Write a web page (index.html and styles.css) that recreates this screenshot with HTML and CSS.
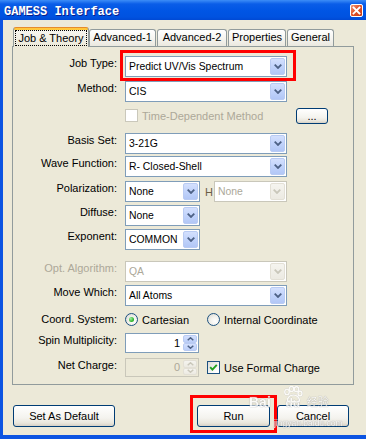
FILE: index.html
```html
<!DOCTYPE html>
<html>
<head>
<meta charset="utf-8">
<title>GAMESS Interface</title>
<link rel="stylesheet" href="styles.css">
</head>
<body>
<div class="window">
  <div class="titlebar">
    <span class="title">GAMESS Interface</span>
    <span class="close"><svg width="9" height="9" viewBox="0 0 9 9"><path d="M1.5 1.5L7.5 7.5M7.5 1.5L1.5 7.5" stroke="#fff" stroke-width="1.8" stroke-linecap="square"/></svg></span>
  </div>
  <div class="client">
    <div class="tabs">
      <div class="tab tab-active tw1"><span class="focus">Job &amp; Theory</span></div>
      <div class="tab tw2">Advanced-1</div>
      <div class="tab tw3">Advanced-2</div>
      <div class="tab tw4">Properties</div>
      <div class="tab tw5">General</div>
    </div>
    <div class="panel">
      <div class="row first">
        <span class="lbl">Job Type:</span>
        <div class="combo wide"><span class="val">Predict UV/Vis Spectrum</span><span class="drop"><svg width="8" height="5" viewBox="0 0 8 5"><polyline points="0.7,0.7 4,4 7.3,0.7" fill="none" stroke="#4D6185" stroke-width="1.8"/></svg></span></div>
      </div>
      <div class="row mt4">
        <span class="lbl">Method:</span>
        <div class="combo wide"><span class="val">CIS</span><span class="drop"><svg width="8" height="5" viewBox="0 0 8 5"><polyline points="0.7,0.7 4,4 7.3,0.7" fill="none" stroke="#4D6185" stroke-width="1.8"/></svg></span></div>
      </div>
      <div class="row">
        <span class="lbl"></span>
        <div class="tdm">
          <span class="check disabled"></span>
          <span class="opt-text dis">Time-Dependent Method</span>
          <span class="btn dots">...</span>
        </div>
      </div>
      <div class="row mt7">
        <span class="lbl">Basis Set:</span>
        <div class="combo wide"><span class="val">3-21G</span><span class="drop"><svg width="8" height="5" viewBox="0 0 8 5"><polyline points="0.7,0.7 4,4 7.3,0.7" fill="none" stroke="#4D6185" stroke-width="1.8"/></svg></span></div>
      </div>
      <div class="row mt2">
        <span class="lbl">Wave Function:</span>
        <div class="combo wide"><span class="val">R- Closed-Shell</span><span class="drop"><svg width="8" height="5" viewBox="0 0 8 5"><polyline points="0.7,0.7 4,4 7.3,0.7" fill="none" stroke="#4D6185" stroke-width="1.8"/></svg></span></div>
      </div>
      <div class="row mt4">
        <span class="lbl">Polarization:</span>
        <div class="combo small"><span class="val">None</span><span class="drop"><svg width="8" height="5" viewBox="0 0 8 5"><polyline points="0.7,0.7 4,4 7.3,0.7" fill="none" stroke="#4D6185" stroke-width="1.8"/></svg></span></div>
        <span class="hlabel">H</span>
        <div class="combo hsmall off"><span class="val">None</span><span class="drop"><svg width="8" height="5" viewBox="0 0 8 5"><polyline points="0.7,0.7 4,4 7.3,0.7" fill="none" stroke="#C9C7BA" stroke-width="1.8"/></svg></span></div>
      </div>
      <div class="row">
        <span class="lbl">Diffuse:</span>
        <div class="combo small"><span class="val">None</span><span class="drop"><svg width="8" height="5" viewBox="0 0 8 5"><polyline points="0.7,0.7 4,4 7.3,0.7" fill="none" stroke="#4D6185" stroke-width="1.8"/></svg></span></div>
      </div>
      <div class="row">
        <span class="lbl">Exponent:</span>
        <div class="combo small"><span class="val">COMMON</span><span class="drop"><svg width="8" height="5" viewBox="0 0 8 5"><polyline points="0.7,0.7 4,4 7.3,0.7" fill="none" stroke="#4D6185" stroke-width="1.8"/></svg></span></div>
      </div>
      <div class="row mt11">
        <span class="lbl dis">Opt. Algorithm:</span>
        <div class="combo wide off"><span class="val">QA</span><span class="drop"><svg width="8" height="5" viewBox="0 0 8 5"><polyline points="0.7,0.7 4,4 7.3,0.7" fill="none" stroke="#C9C7BA" stroke-width="1.8"/></svg></span></div>
      </div>
      <div class="row">
        <span class="lbl">Move Which:</span>
        <div class="combo wide"><span class="val">All Atoms</span><span class="drop"><svg width="8" height="5" viewBox="0 0 8 5"><polyline points="0.7,0.7 4,4 7.3,0.7" fill="none" stroke="#4D6185" stroke-width="1.8"/></svg></span></div>
      </div>
      <div class="row">
        <span class="lbl mid">Coord. System:</span>
        <div class="radios">
          <span class="ropt first-opt"><span class="radio on"><span class="dot"></span></span><span class="opt-text">Cartesian</span></span>
          <span class="ropt"><span class="radio"></span><span class="opt-text">Internal Coordinate</span></span>
        </div>
      </div>
      <div class="row spinrow">
        <span class="lbl">Spin Multiplicity:</span>
        <div class="spin"><span class="sval">1</span><span class="sbtns"><span class="sb"><svg width="7" height="4" viewBox="0 0 7 4"><polyline points="0.7,3.3 3.5,0.8 6.3,3.3" fill="none" stroke="#4D6185" stroke-width="1.5"/></svg></span><span class="sb"><svg width="7" height="4" viewBox="0 0 7 4"><polyline points="0.7,0.7 3.5,3.2 6.3,0.7" fill="none" stroke="#4D6185" stroke-width="1.5"/></svg></span></span></div>
      </div>
      <div class="row netrow">
        <span class="lbl">Net Charge:</span>
        <div class="spin off"><span class="sval">0</span><span class="sbtns"><span class="sb"><svg width="7" height="4" viewBox="0 0 7 4"><polyline points="0.7,3.3 3.5,0.8 6.3,3.3" fill="none" stroke="#C9C7BA" stroke-width="1.5"/></svg></span><span class="sb"><svg width="7" height="4" viewBox="0 0 7 4"><polyline points="0.7,0.7 3.5,3.2 6.3,0.7" fill="none" stroke="#C9C7BA" stroke-width="1.5"/></svg></span></span></div>
        <span class="check checked"><svg width="11" height="11" viewBox="0 0 11 11"><polyline points="2.2,5.2 4.4,7.6 8.8,2.8" fill="none" stroke="#21A121" stroke-width="1.9"/></svg></span>
        <span class="opt-text">Use Formal Charge</span>
      </div>
    </div>
    <div class="buttons">
      <span class="btn bdef">Set As Default</span>
      <span class="btn brun">Run</span>
      <span class="btn bcancel">Cancel</span>
    </div>
  </div>
  <div class="highlight hl-job"></div>
  <div class="highlight hl-run"></div>
  <div class="watermark">
    <div class="wm-top">
      <span class="wm-bai">Bai</span>
      <span class="wm-pawdu"><svg class="paw" width="20" height="17" viewBox="0 0 20 17"><g fill="none" stroke="#fff" stroke-width="1.6"><ellipse cx="4" cy="6" rx="2.2" ry="2.8"/><ellipse cx="8.5" cy="3" rx="2.2" ry="2.5"/><ellipse cx="13.5" cy="3.2" rx="2.2" ry="2.5"/><ellipse cx="17" cy="7.5" rx="2" ry="2.4"/><path d="M4.5 14.5C4.5 11 7.5 9 10.5 9S16.5 11.5 16.5 14.5C16.5 16 14 16.3 10.5 15.6C7 16.3 4.5 16 4.5 14.5Z"/></g></svg><span class="wm-du">du</span></span>
      <span class="cjk">经验</span>
    </div>
    <div class="wm-url">jingyan.baidu.com</div>
  </div>
</div>
</body>
</html>
```

FILE: styles.css
```css
* { box-sizing: border-box; }
html, body { margin: 0; padding: 0; }
body {
  width: 366px;
  height: 439px;
  overflow: hidden;
  background: #ECE9D8;
  font-family: "Liberation Sans", Arial, sans-serif;
  font-size: 11px;
  color: #000;
}
.window {
  position: relative;
  width: 366px;
  height: 439px;
  background: #0C54E2;
  display: flex;
  flex-direction: column;
  overflow: hidden;
}
.titlebar {
  flex: none;
  height: 20px;
  background: linear-gradient(#3D8DF7 0%, #0A5DE8 20%, #0055E4 55%, #0052E0 85%, #0049D4 100%);
  display: flex;
  align-items: flex-start;
  justify-content: space-between;
  padding-left: 4px;
}
.title {
  font-family: "Liberation Mono", "DejaVu Sans Mono", monospace;
  font-weight: bold;
  font-size: 12px;
  line-height: 14px;
  padding-top: 5px;
  color: #fff;
  text-shadow: 1px 1px 0 #0A1E8A;
}
.close {
  width: 13px;
  height: 13px;
  margin-top: 4px;
  margin-right: 3px;
  border: 1px solid #fff;
  border-radius: 2px;
  background: linear-gradient(135deg, #F09A7A 0%, #E2552C 45%, #C93A12 100%);
  display: flex;
  align-items: center;
  justify-content: center;
}
.client {
  flex: none;
  height: 415px;
  margin-left: 3px;
  background: #ECE9D8;
  padding-top: 7px;
}
.tabs {
  position: relative;
  z-index: 1;
  display: flex;
  align-items: flex-start;
  height: 20px;
  margin-left: 10px;
  margin-bottom: -1px;
}
.tab {
  height: 17px;
  margin-top: 2px;
  border: 1px solid #919B9C;
  border-bottom: none;
  border-radius: 3px 3px 0 0;
  background: linear-gradient(#FFFFFF, #F5F4EF 55%, #EAE8DF);
  text-align: center;
  line-height: 15px;
  white-space: nowrap;
}
.tab-active {
  height: 20px;
  margin-top: 0;
  border-top: 1px solid #E68B2C;
  background: linear-gradient(#FFC73C 0, #FFC73C 2px, #F6F5F0 2px, #ECE9D8);
  padding-top: 1px;
}
.focus {
  display: inline-block;
  width: 72px;
  height: 16px;
  margin-top: 1px;
  border: 1px dotted #000;
  line-height: 14px;
  text-align: center;
}
.tw1 { width: 76px; }
.tw2 { width: 67px; }
.tw3 { width: 70px; margin-left: 1px; }
.tw4 { width: 58px; margin-left: 1px; }
.tw5 { width: 47px; margin-left: 1px; }

.panel {
  width: 342px;
  height: 339px;
  margin-left: 9px;
  border: 1px solid #919B9C;
  background: #ECE9D8;
  padding-top: 9px;
  display: flex;
  flex-direction: column;
}
.row {
  display: flex;
  align-items: center;
  height: 21px;
  margin-top: 3px;
  flex: none;
}
.row.first { margin-top: 0; }
.row.mt2 { margin-top: 2px; }
.row.mt4 { margin-top: 4px; }
.row.mt7 { margin-top: 7px; }
.row.mt11 { margin-top: 11px; }
.row.spinrow { height: 20px; }
.row.netrow { height: 19px; margin-top: 5px; }

.lbl {
  flex: none;
  width: 104px;
  margin-right: 8px;
  align-self: flex-start;
  padding-top: 1px;
  line-height: 13px;
  text-align: right;
  white-space: nowrap;
}
.lbl.mid { align-self: center; padding-top: 0; }
.dis { color: #ACA899; }

.combo {
  flex: none;
  height: 21px;
  border: 1px solid #7F9DB9;
  background: #fff;
  display: flex;
  align-items: center;
}
.combo.wide { width: 162px; }
.combo.small { width: 75px; }
.combo.hsmall { width: 73px; }
.combo .val {
  flex: 1;
  padding-left: 3px;
  font-size: 10.4px;
  white-space: nowrap;
  overflow: hidden;
}
.drop {
  flex: none;
  width: 15px;
  height: 17px;
  margin-right: 1px;
  border: 1px solid #B9CBF3;
  border-radius: 2px;
  background: linear-gradient(#D4E0FD, #C1D3FB 50%, #B2C7F6);
  display: flex;
  align-items: center;
  justify-content: center;
}
.combo.off { border-color: #C9C7BA; }
.combo.off .val { color: #ACA899; }
.combo.off .drop {
  border-color: #E3E0D6;
  background: linear-gradient(#F5F4EF, #ECEAE2);
}
.hlabel {
  margin-left: 5px;
  margin-right: 1px;
  color: #6B5D45;
}

.tdm {
  display: flex;
  align-items: center;
  width: 203px;
}
.opt-text { margin-left: 4px; white-space: nowrap; }
.check {
  flex: none;
  width: 13px;
  height: 13px;
  border: 1px solid #1C5180;
  background: linear-gradient(135deg, #DCDCD7, #FFFFFF 80%);
  display: flex;
  align-items: center;
  justify-content: center;
}
.check.disabled {
  border-color: #CAC8BB;
  background: #fff;
}
.check.checked { margin-left: 8px; }

.btn {
  display: flex;
  align-items: center;
  justify-content: center;
  border: 1px solid #003C74;
  border-radius: 3px;
  background: linear-gradient(#FFFFFF, #F4F3EE 60%, #E9E6DC 85%, #D6D0C5);
  white-space: nowrap;
  flex: none;
}
.dots {
  width: 32px;
  height: 16px;
  margin-left: auto;
  line-height: 12px;
  align-items: flex-start;
  padding-top: 1px;
}

.radios { display: flex; align-items: center; }
.ropt { display: flex; align-items: center; }
.ropt.first-opt { width: 82px; }
.radio {
  flex: none;
  width: 13px;
  height: 13px;
  border-radius: 50%;
  border: 1px solid #1C5180;
  background: radial-gradient(circle at 65% 65%, #FFFFFF 0%, #F2F1EC 45%, #D5D4CC 100%);
  display: flex;
  align-items: center;
  justify-content: center;
}
.dot {
  width: 5px;
  height: 5px;
  border-radius: 50%;
  background: radial-gradient(circle at 35% 35%, #A6F0A6, #2FB62F 60%, #1C8F1C);
}

.spin {
  flex: none;
  width: 74px;
  height: 100%;
  border: 1px solid #7F9DB9;
  background: #fff;
  display: flex;
}
.sval {
  flex: 1;
  text-align: right;
  padding-right: 3px;
  align-self: center;
  line-height: 13px;
}
.sbtns {
  flex: none;
  width: 15px;
  display: flex;
  flex-direction: column;
  padding: 1px 1px 1px 0;
}
.sb {
  flex: 1;
  border: 1px solid #B9CBF3;
  border-radius: 2px;
  background: linear-gradient(#D4E0FD, #BCCFF9);
  display: flex;
  align-items: center;
  justify-content: center;
}
.spin.off {
  border-color: #C9C7BA;
  background: #ECE9D8;
}
.spin.off .sval { color: #ACA899; }
.spin.off .sb {
  border-color: #E3E0D6;
  background: linear-gradient(#F5F4EF, #ECEAE2);
}

.buttons {
  display: flex;
  margin-top: 20px;
  padding-left: 10px;
}
.buttons .btn { height: 22px; }
.bdef { width: 102px; }
.brun { width: 73px; margin-left: 82px; }
.bcancel { width: 72px; margin-left: 7px; }

.highlight {
  position: absolute;
  border: 3px solid #F00;
  pointer-events: none;
}
.hl-job { left: 120px; top: 50px; width: 176px; height: 31px; }
.hl-run { left: 190px; top: 395px; width: 87px; height: 38px; }

.watermark {
  position: absolute;
  left: 249px;
  top: 382px;
  width: 92px;
  color: #fff;
  opacity: 0.8;
  text-shadow: 0 0 1px #9A9A9A, 0 0 1px #9A9A9A;
  pointer-events: none;
}
.wm-top {
  display: flex;
  align-items: flex-end;
  height: 27px;
  font-size: 14px;
  font-weight: bold;
  line-height: 14px;
}
.wm-bai { margin-right: 12px; }
.wm-pawdu {
  display: flex;
  flex-direction: column;
  align-items: center;
}
.paw {
  margin-bottom: -6px;
  filter: drop-shadow(0 0 0.6px #9A9A9A);
}
.wm-du { font-size: 12px; line-height: 12px; }
.wm-top .cjk {
  margin-left: 4px;
  margin-bottom: 1px;
  font-family: "Noto Sans CJK SC", sans-serif;
  font-weight: normal;
  font-size: 11px;
  line-height: 13px;
}
.wm-url {
  margin-top: 10px;
  margin-left: 25px;
  font-size: 8.5px;
  line-height: 9px;
  white-space: nowrap;
}
```
